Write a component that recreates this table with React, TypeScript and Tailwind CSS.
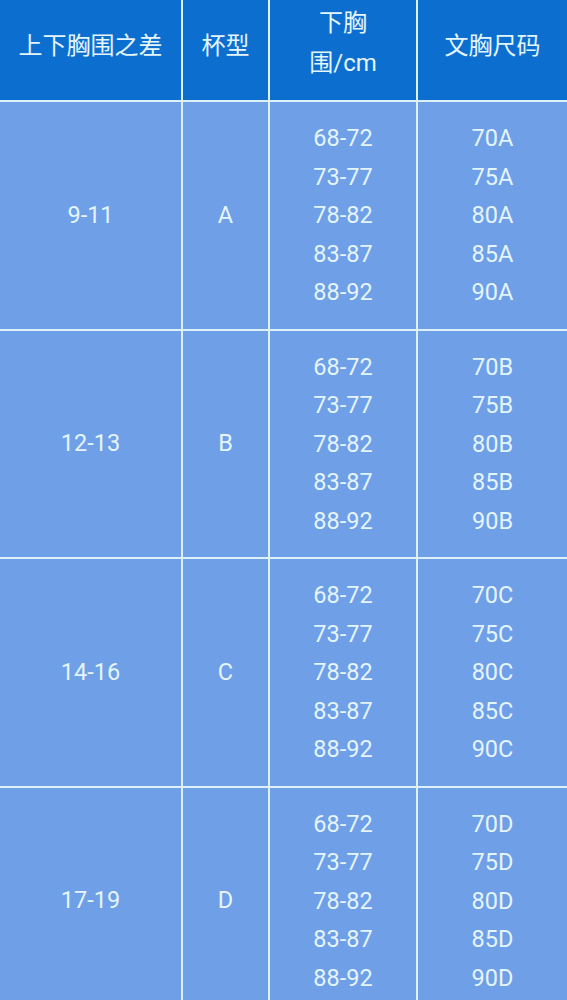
const groups = [
  { diff: "9-11", cup: "A" },
  { diff: "12-13", cup: "B" },
  { diff: "14-16", cup: "C" },
  { diff: "17-19", cup: "D" },
];

const bands = ["68-72", "73-77", "78-82", "83-87", "88-92"];
const sizes = ["70", "75", "80", "85", "90"];

export default function App() {
  return (
    <div
      className="w-[567px] h-[1000px] overflow-hidden bg-[#6f9fe7] text-[#e4f5fb]"
      style={{ fontFamily: 'Roboto, "Noto Sans CJK SC", sans-serif' }}
    >
      <div className="grid grid-cols-[181px_85px_146px_1fr] gap-[2px] bg-[#dcf1fa]">
        {/* header */}
        <div className="h-[100px] pb-[8px] bg-[#0c6fd0] flex items-center justify-center text-[24px]">
          上下胸围之差
        </div>
        <div className="h-[100px] pb-[8px] bg-[#0c6fd0] flex items-center justify-center text-[24px]">
          杯型
        </div>
        <div className="h-[100px] pb-[14px] bg-[#0c6fd0] flex flex-col items-center justify-center text-[24px] leading-[40px]">
          <span>下胸</span>
          <span>围/cm</span>
        </div>
        <div className="h-[100px] pb-[8px] bg-[#0c6fd0] flex items-center justify-center text-[24px]">
          文胸尺码
        </div>

        {groups.map((g) => (
          <div key={g.cup} className="contents">
            <div className="h-[226.5px] bg-[#6f9fe7] flex items-center justify-center text-[23.5px]">
              {g.diff}
            </div>
            <div className="h-[226.5px] bg-[#6f9fe7] flex items-center justify-center text-[23.5px]">
              {g.cup}
            </div>
            <div className="h-[226.5px] bg-[#6f9fe7] flex flex-col items-center justify-center text-[23.5px] leading-[38.5px]">
              {bands.map((b) => (
                <span key={b}>{b}</span>
              ))}
            </div>
            <div className="h-[226.5px] bg-[#6f9fe7] flex flex-col items-center justify-center text-[23.5px] leading-[38.5px]">
              {sizes.map((s) => (
                <span key={s}>
                  {s}
                  {g.cup}
                </span>
              ))}
            </div>
          </div>
        ))}
      </div>
    </div>
  );
}
